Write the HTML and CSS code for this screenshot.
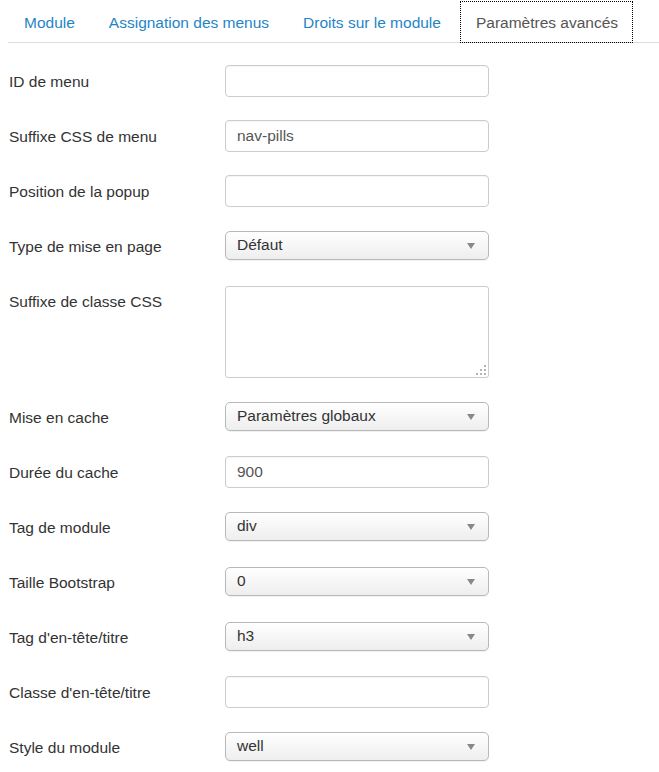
FILE: index.html
```html
<!DOCTYPE html>
<html lang="fr">
<head>
<meta charset="utf-8">
<link rel="stylesheet" href="styles.css">
</head>
<body>
<ul class="tabs">
  <li class="tab"><a href="#">Module</a></li>
  <li class="tab"><a href="#">Assignation des menus</a></li>
  <li class="tab"><a href="#">Droits sur le module</a></li>
  <li class="tab active"><a href="#">Paramètres avancés</a></li>
</ul>
<form class="form">
  <div class="row"><label class="lbl">ID de menu</label><div class="ctrl"><input class="inp" type="text" value=""></div></div>
  <div class="row"><label class="lbl">Suffixe CSS de menu</label><div class="ctrl"><input class="inp" type="text" value="nav-pills"></div></div>
  <div class="row"><label class="lbl">Position de la popup</label><div class="ctrl"><input class="inp" type="text" value=""></div></div>
  <div class="row"><label class="lbl">Type de mise en page</label><div class="ctrl"><div class="sel">Défaut<span class="arrow"></span></div></div></div>
  <div class="row"><label class="lbl">Suffixe de classe CSS</label><div class="ctrl"><div class="ta-wrap"><textarea class="ta"></textarea><svg class="grip" width="12" height="12" viewBox="0 0 12 12"><g fill="#b5b5b5"><rect x="9" y="1" width="2" height="2"/><rect x="5" y="5" width="2" height="2"/><rect x="9" y="5" width="2" height="2"/><rect x="1" y="9" width="2" height="2"/><rect x="5" y="9" width="2" height="2"/><rect x="9" y="9" width="2" height="2"/></g></svg></div></div></div>
  <div class="row"><label class="lbl">Mise en cache</label><div class="ctrl"><div class="sel">Paramètres globaux<span class="arrow"></span></div></div></div>
  <div class="row"><label class="lbl">Durée du cache</label><div class="ctrl"><input class="inp" type="text" value="900"></div></div>
  <div class="row"><label class="lbl">Tag de module</label><div class="ctrl"><div class="sel">div<span class="arrow"></span></div></div></div>
  <div class="row"><label class="lbl">Taille Bootstrap</label><div class="ctrl"><div class="sel">0<span class="arrow"></span></div></div></div>
  <div class="row"><label class="lbl">Tag d'en-tête/titre</label><div class="ctrl"><div class="sel">h3<span class="arrow"></span></div></div></div>
  <div class="row"><label class="lbl">Classe d'en-tête/titre</label><div class="ctrl"><input class="inp" type="text" value=""></div></div>
  <div class="row"><label class="lbl">Style du module</label><div class="ctrl"><div class="sel">well<span class="arrow"></span></div></div></div>
</form>
</body>
</html>
```
FILE: styles.css
```css
* { box-sizing: border-box; }
html, body { margin: 0; padding: 0; background: #fff; }
body {
  font-family: "Liberation Sans", Arial, sans-serif;
  font-size: 15.5px;
  color: #333;
  padding: 0 0 0 8px;
  overflow: hidden;
}
.tabs {
  list-style: none;
  margin: 0 0 22px 0;
  padding: 2px 0 0 0;
  display: flex;
  border-bottom: 1px solid #ddd;
  height: 43px;
}
.tab { margin-right: 2px; }
.tab a {
  display: block;
  height: 40px;
  line-height: 41px;
  padding: 0 16px;
  color: #1f85c7;
  text-decoration: none;
}
.tab.active { margin-left: 2px; }
.tab.active a {
  color: #555;
  padding: 0 14px 0 15px;
  outline: 1px dotted #000;
  outline-offset: 0;
  border: 0;
  background: #fff;
}
.form { margin: 0; padding-left: 1px; }
.row {
  display: flex;
  align-items: flex-start;
  margin-bottom: 23px;
}
.lbl {
  width: 216px;
  flex: none;
  padding-top: 8px;
  line-height: 18px;
}
.ctrl { width: 264px; }
.inp {
  display: block;
  width: 264px;
  height: 32px;
  border: 1px solid #ccc;
  border-radius: 4px;
  padding: 0 11px;
  font: inherit;
  color: #555;
  background: #fff;
  box-shadow: inset 0 1px 1px rgba(0,0,0,0.04);
}
.sel {
  position: relative;
  height: 29px;
  margin: 1px 0 2px;
  border: 1px solid #b8b8b8;
  border-radius: 5px;
  padding: 0 11px;
  line-height: 26px;
  color: #333;
  background: linear-gradient(#ffffff, #eeeeee);
  box-shadow: 0 1px 1px rgba(0,0,0,0.06);
}
.arrow {
  position: absolute;
  right: 13px;
  top: 11px;
  width: 0;
  height: 0;
  border-left: 4px solid transparent;
  border-right: 4px solid transparent;
  border-top: 6px solid #888;
}
.ta-wrap { position: relative; margin-top: 1px; }
.ta {
  display: block;
  width: 264px;
  height: 92px;
  border: 1px solid #ccc;
  border-radius: 3px;
  resize: none;
  font: inherit;
  background: #fff;
}
.grip { position: absolute; right: 2px; bottom: 2px; }
```
